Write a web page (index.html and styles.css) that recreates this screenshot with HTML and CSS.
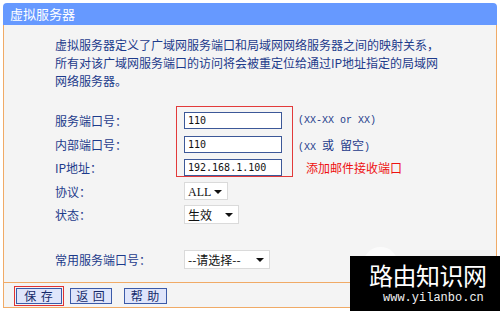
FILE: index.html
```html
<!DOCTYPE html>
<html lang="zh-CN">
<head>
<meta charset="utf-8">
<title>虚拟服务器</title>
<link rel="stylesheet" href="styles.css">
</head>
<body>
<div class="page">
  <div class="titlebar">虚拟服务器</div>
  <div class="panel">
    <div class="content">
      <p class="intro">虚拟服务器定义了广域网服务端口和局域网网络服务器之间的映射关系，<br>所有对该广域网服务端口的访问将会被重定位给通过IP地址指定的局域网<br>网络服务器。</p>
      <div class="form">
        <div class="row h24"><span class="label">服务端口号：</span><span class="input">110</span><span class="hint mono">(XX-XX or XX)</span></div>
        <div class="row h24"><span class="label">内部端口号：</span><span class="input">110</span><span class="hint"><span class="mono">(XX </span>或<span class="mono"> </span>留空<span class="mono">)</span></span></div>
        <div class="row h23"><span class="label">IP地址：</span><span class="input">192.168.1.100</span><span class="note">添加邮件接收端口</span></div>
        <div class="row h24"><span class="label">协议：</span><span class="select s-all"><span class="serif">ALL</span><i class="arrow"></i></span></div>
        <div class="row h23"><span class="label">状态：</span><span class="select s-state">生效<i class="arrow"></i></span></div>
        <div class="row h23 gap-top"><span class="label">常用服务端口号：</span><span class="select s-common">--请选择--<i class="arrow"></i></span></div>
        <div class="annot"></div>
      </div>
    </div>
    <div class="btnbar">
      <span class="btn b-save">保 存</span>
      <span class="btn b-back">返 回</span>
      <span class="btn b-help">帮 助</span>
    </div>
  </div>
  <div class="ghost">
    <span class="ghost-circle"></span>
    <span class="ghost-bar"></span>
  </div>
  <div class="watermark">
    <div class="wm-title">路由知识网</div>
    <div class="wm-url">www.yilanbo.cn</div>
  </div>
</div>
</body>
</html>
```
FILE: styles.css
```css
html, body {
  margin: 0;
  padding: 0;
  background: #ffffff;
}
body {
  font-family: "Noto Sans CJK SC", "Noto Sans", sans-serif;
  font-size: 12px;
  color: #1d3b8b;
}
.page {
  position: relative;
  width: 494px;
  height: 308px;
  margin: 3px 0 0 3px;
}
.titlebar {
  height: 22px;
  line-height: 22px;
  background: #6699ff;
  color: #ffffff;
  font-size: 13px;
  padding-left: 7px;
  border-radius: 4px 4px 0 0;
}
.panel {
  background: #f4f4f4;
  border-left: 1px solid #f0aa66;
  border-right: 1px solid #f0aa66;
}
.content {
  padding: 11px 0 11px 51px;
  border-bottom: 1px solid #f0aa66;
}
.intro {
  margin: 0;
  line-height: 18px;
}
.form {
  position: relative;
  margin-top: 18px;
}
.row {
  display: flex;
  align-items: center;
}
.h24 { height: 24px; }
.h23 { height: 23px; }
.gap-top { margin-top: 22px; }
.label {
  width: 129px;
  flex: none;
}
.mono {
  font-family: "Liberation Mono", monospace;
  font-size: 10px;
}
.serif {
  font-family: "Liberation Serif", serif;
  font-size: 12px;
}
.input {
  box-sizing: border-box;
  width: 98px;
  height: 17px;
  line-height: 15px;
  background: #ffffff;
  border: 1px solid #3c5898;
  padding-left: 3px;
  font-family: "DejaVu Sans Mono", monospace;
  font-size: 10px;
  color: #111111;
}
.hint {
  margin-left: 16px;
  color: #1d3b8b;
}
.note {
  margin-left: 24px;
  color: #ee1111;
}
.select {
  box-sizing: border-box;
  position: relative;
  height: 19px;
  line-height: 17px;
  background: #ffffff;
  border: 1px solid #dadada;
  padding-left: 3px;
  color: #111111;
}
.s-all { width: 44px; height: 18px; line-height: 16px; }
.s-state { width: 55px; }
.s-common { width: 86px; }
.arrow {
  position: absolute;
  right: 5px;
  top: 7px;
  width: 0;
  height: 0;
  border-left: 4px solid transparent;
  border-right: 4px solid transparent;
  border-top: 4px solid #111111;
}
.annot {
  position: absolute;
  left: 121px;
  top: -2px;
  width: 117px;
  height: 71px;
  box-sizing: border-box;
  border: 1px solid #e23a3a;
}
.btnbar {
  display: flex;
  align-items: flex-start;
  height: 25px;
  box-sizing: border-box;
  padding: 5px 0 0 12px;
  border-bottom: 1px solid #f0aa66;
}
.btn {
  box-sizing: border-box;
  height: 16px;
  line-height: 14px;
  text-align: center;
  background: #dfe5fb;
  border: 1px solid #3b5aa8;
  color: #152a6a;
  font-size: 12px;
  letter-spacing: 1px;
}
.b-save {
  width: 46px;
  margin-right: 8px;
  outline: 1px solid #e03333;
  outline-offset: 1px;
}
.b-back { width: 42px; margin-right: 12px; }
.b-help { width: 43px; }
.ghost {
  position: absolute;
  left: 360px;
  top: 244px;
  height: 9px;
  overflow: hidden;
  display: flex;
  align-items: flex-start;
}
.ghost-circle {
  width: 35px;
  height: 35px;
  border-radius: 50%;
  background: #fbfbfb;
}
.ghost-bar {
  margin: 3px 0 0 22px;
  width: 70px;
  height: 6px;
  background: #ececec;
}
.watermark {
  position: absolute;
  left: 347px;
  top: 253px;
  width: 150px;
  height: 55px;
  background: #000000;
  color: #ffffff;
}
.wm-title {
  font-size: 24px;
  line-height: 26px;
  margin: 6px 0 0 19px;
  letter-spacing: -0.5px;
}
.wm-url {
  font-family: "Liberation Mono", monospace;
  font-size: 12px;
  line-height: 14px;
  margin: 3px 0 0 33px;
  color: #f0f0f0;
}
```
